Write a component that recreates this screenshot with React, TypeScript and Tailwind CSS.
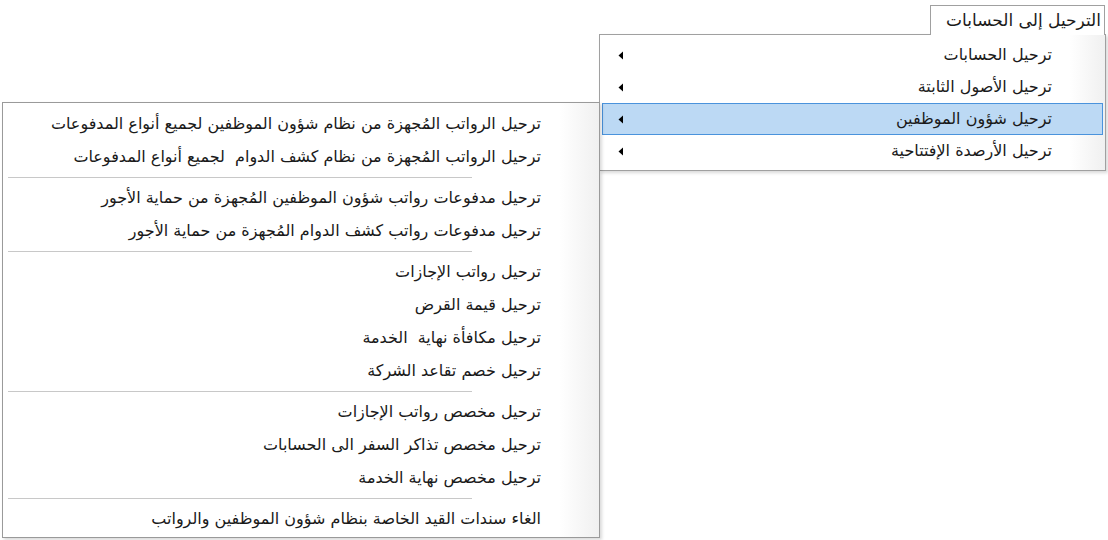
import React from 'react';

type Entry = { label: string } | { sep: true };

const subItems = [
  'ترحيل الحسابات',
  'ترحيل الأصول الثابتة',
  'ترحيل شؤون الموظفين',
  'ترحيل الأرصدة الإفتتاحية',
];

const hrItems: Entry[] = [
  { label: 'ترحيل الرواتب المُجهزة من نظام شؤون الموظفين لجميع أنواع المدفوعات' },
  { label: 'ترحيل الرواتب المُجهزة من نظام كشف الدوام  لجميع أنواع المدفوعات' },
  { sep: true },
  { label: 'ترحيل مدفوعات رواتب شؤون الموظفين المُجهزة من حماية الأجور' },
  { label: 'ترحيل مدفوعات رواتب كشف الدوام المُجهزة من حماية الأجور' },
  { sep: true },
  { label: 'ترحيل رواتب الإجازات' },
  { label: 'ترحيل قيمة القرض' },
  { label: 'ترحيل مكافأة نهاية  الخدمة' },
  { label: 'ترحيل خصم تقاعد الشركة' },
  { sep: true },
  { label: 'ترحيل مخصص رواتب الإجازات' },
  { label: 'ترحيل مخصص تذاكر السفر الى الحسابات' },
  { label: 'ترحيل مخصص نهاية الخدمة' },
  { sep: true },
  { label: 'الغاء سندات القيد الخاصة بنظام شؤون الموظفين والرواتب' },
];

const Arrow = () => (
  <svg width="6" height="9" viewBox="0 0 6 9" className="shrink-0">
    <path d="M5 0.5 L0.5 4.5 L5 8.5 Z" fill="#000" />
  </svg>
);

const App: React.FC = () => {
  return (
    <div
      className="relative w-[1108px] h-[540px] bg-white overflow-hidden text-[#1a1a1a]"
      style={{ fontFamily: '"DejaVu Sans", Tahoma, sans-serif' }}
    >
      {/* top level menu item */}
      <div
        dir="rtl"
        className="absolute left-[930px] top-[5px] w-[175px] h-[30px] bg-white border-t border-l border-r border-[#a0a0a0] flex items-center justify-start pr-[3px] text-[17px] z-20"
      >
        الترحيل إلى الحسابات
      </div>

      {/* first submenu */}
      <div
        dir="rtl"
        className="absolute left-[599px] top-[34px] w-[507px] h-[137px] bg-white border border-[#a0a0a0] shadow-[2px_2px_3px_rgba(0,0,0,0.15)] py-[4px] px-[2px] z-10"
      >
        <div className="absolute right-0 top-0 bottom-0 w-[36px] bg-gradient-to-l from-[#f0f0f0] to-white" />
        <div className="relative flex flex-col">
          {subItems.map((s, i) => (
            <div
              key={s}
              className={
                i === 2
                  ? 'flex items-center justify-between h-[32px] pr-[50px] pl-[15px] bg-[#bcd9f4] border border-[#4a93dc] text-[16px]'
                  : 'flex items-center justify-between h-[32px] pr-[50px] pl-[15px] border border-transparent text-[16px]'
              }
            >
              <span>{s}</span>
              <Arrow />
            </div>
          ))}
        </div>
      </div>

      {/* second submenu */}
      <div
        dir="rtl"
        className="absolute left-[2px] top-[102px] w-[598px] h-[436px] bg-white border border-[#9a9a9a] shadow-[2px_2px_3px_rgba(0,0,0,0.15)] pt-[4px] px-[2px] z-30"
      >
        <div className="absolute right-0 top-0 bottom-0 w-[40px] bg-gradient-to-l from-[#f0f0f0] to-white" />
        <div className="relative flex flex-col">
          {hrItems.map((e, i) =>
            'sep' in e ? (
              <div key={i} className="h-[8px] flex items-center pr-[125px] pl-[3px]">
                <div className="h-px w-full bg-[#c8c8c8]" />
              </div>
            ) : (
              <div
                key={i}
                className="flex items-center h-[33px] pr-[56px] text-[16px] whitespace-pre"
              >
                {e.label}
              </div>
            )
          )}
        </div>
      </div>
    </div>
  );
};

export default App;
